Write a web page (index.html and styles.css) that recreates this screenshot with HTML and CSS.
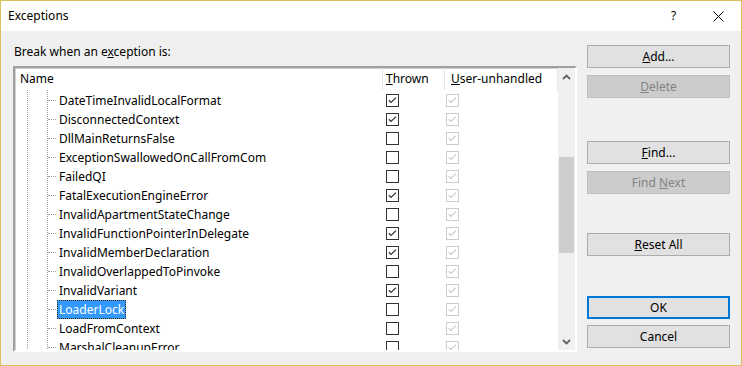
FILE: index.html
```html
<!DOCTYPE html>
<html lang="en">
<head>
	<meta charset="UTF-8">
	<title>Exceptions</title>
	<link rel="stylesheet" href="styles.css">
</head>
<body>
<svg class="defs" width="0" height="0">
	<symbol id="cb-on" viewBox="0 0 13 13">
		<rect x="0.5" y="0.5" width="12" height="12" fill="#fff" stroke="currentColor"/>
		<polyline points="2.8,6.2 5,8.4 10,3.6" fill="none" stroke="currentColor" stroke-width="1.3"/>
	</symbol>
	<symbol id="cb-off" viewBox="0 0 13 13">
		<rect x="0.5" y="0.5" width="12" height="12" fill="#fff" stroke="currentColor"/>
	</symbol>
</svg>
<div class="window">
	<div class="titlebar">
		<span class="title">Exceptions</span>
		<span class="help">?</span>
		<span class="close">
			<svg width="11" height="11" viewBox="0 0 11 11"><path d="M0.5 0.5 L10.5 10.5 M10.5 0.5 L0.5 10.5" stroke="#000" stroke-width="1"/></svg>
		</span>
	</div>
	<div class="body">
		<div class="main">
			<div class="prompt">Break when an e<u>x</u>ception is:</div>
			<div class="listbox">
				<div class="grid">
					<div class="header">
						<div class="hcell name">Name</div>
						<div class="hcell thrown"><u>T</u>hrown</div>
						<div class="hcell user"><u>U</u>ser-unhandled</div>
					</div>
					<div class="rows">
						<div class="row"><div class="cell name"><span class="label">DateTimeInvalidLocalFormat</span></div><div class="cell thrown"><svg class="cb"><use href="#cb-on"/></svg></div><div class="cell user"><svg class="cb off"><use href="#cb-on"/></svg></div></div>
						<div class="row"><div class="cell name"><span class="label">DisconnectedContext</span></div><div class="cell thrown"><svg class="cb"><use href="#cb-on"/></svg></div><div class="cell user"><svg class="cb off"><use href="#cb-on"/></svg></div></div>
						<div class="row"><div class="cell name"><span class="label">DllMainReturnsFalse</span></div><div class="cell thrown"><svg class="cb"><use href="#cb-off"/></svg></div><div class="cell user"><svg class="cb off"><use href="#cb-on"/></svg></div></div>
						<div class="row"><div class="cell name"><span class="label">ExceptionSwallowedOnCallFromCom</span></div><div class="cell thrown"><svg class="cb"><use href="#cb-off"/></svg></div><div class="cell user"><svg class="cb off"><use href="#cb-on"/></svg></div></div>
						<div class="row"><div class="cell name"><span class="label">FailedQI</span></div><div class="cell thrown"><svg class="cb"><use href="#cb-off"/></svg></div><div class="cell user"><svg class="cb off"><use href="#cb-on"/></svg></div></div>
						<div class="row"><div class="cell name"><span class="label">FatalExecutionEngineError</span></div><div class="cell thrown"><svg class="cb"><use href="#cb-on"/></svg></div><div class="cell user"><svg class="cb off"><use href="#cb-on"/></svg></div></div>
						<div class="row"><div class="cell name"><span class="label">InvalidApartmentStateChange</span></div><div class="cell thrown"><svg class="cb"><use href="#cb-off"/></svg></div><div class="cell user"><svg class="cb off"><use href="#cb-on"/></svg></div></div>
						<div class="row"><div class="cell name"><span class="label">InvalidFunctionPointerInDelegate</span></div><div class="cell thrown"><svg class="cb"><use href="#cb-on"/></svg></div><div class="cell user"><svg class="cb off"><use href="#cb-on"/></svg></div></div>
						<div class="row"><div class="cell name"><span class="label">InvalidMemberDeclaration</span></div><div class="cell thrown"><svg class="cb"><use href="#cb-on"/></svg></div><div class="cell user"><svg class="cb off"><use href="#cb-on"/></svg></div></div>
						<div class="row"><div class="cell name"><span class="label">InvalidOverlappedToPinvoke</span></div><div class="cell thrown"><svg class="cb"><use href="#cb-off"/></svg></div><div class="cell user"><svg class="cb off"><use href="#cb-on"/></svg></div></div>
						<div class="row"><div class="cell name"><span class="label">InvalidVariant</span></div><div class="cell thrown"><svg class="cb"><use href="#cb-on"/></svg></div><div class="cell user"><svg class="cb off"><use href="#cb-on"/></svg></div></div>
						<div class="row"><div class="cell name"><span class="label selected">LoaderLock</span></div><div class="cell thrown"><svg class="cb"><use href="#cb-off"/></svg></div><div class="cell user"><svg class="cb off"><use href="#cb-on"/></svg></div></div>
						<div class="row"><div class="cell name"><span class="label">LoadFromContext</span></div><div class="cell thrown"><svg class="cb"><use href="#cb-off"/></svg></div><div class="cell user"><svg class="cb off"><use href="#cb-on"/></svg></div></div>
						<div class="row"><div class="cell name"><span class="label">MarshalCleanupError</span></div><div class="cell thrown"><svg class="cb"><use href="#cb-off"/></svg></div><div class="cell user"><svg class="cb off"><use href="#cb-on"/></svg></div></div>
					</div>
				</div>
				<div class="scrollbar">
					<span class="arrow"><svg width="9" height="6" viewBox="0 0 9 6"><polyline points="1,5 4.5,1.5 8,5" fill="none" stroke="#606060" stroke-width="1.8"/></svg></span>
					<div class="track"><div class="thumb"></div></div>
					<span class="arrow"><svg width="9" height="6" viewBox="0 0 9 6"><polyline points="1,1 4.5,4.5 8,1" fill="none" stroke="#606060" stroke-width="1.8"/></svg></span>
				</div>
			</div>
		</div>
		<div class="buttons">
			<button class="btn"><u>A</u>dd...</button>
			<button class="btn disabled"><u>D</u>elete</button>
			<button class="btn gap-find"><u>F</u>ind...</button>
			<button class="btn disabled">Find <u>N</u>ext</button>
			<button class="btn gap-reset"><u>R</u>eset All</button>
			<button class="btn default gap-ok">OK</button>
			<button class="btn">Cancel</button>
		</div>
	</div>
</div>
</body>
</html>
```

FILE: styles.css
```css
* {
    padding: 0;
    margin: 0;
    box-sizing: border-box;
}

body {
    font-family: "Noto Sans", "Open Sans", sans-serif;
    font-size: 12px;
    color: #000;
    background: #f0f0f0;
}

.defs {
    position: absolute;
}

.window {
    width: 742px;
    height: 366px;
    border: 1px solid #dcbf5f;
    background: #f0f0f0;
    display: flex;
    flex-direction: column;
}

.titlebar {
    height: 30px;
    background: #fff;
    display: flex;
    align-items: center;
    padding-left: 7px;
}

.title {
    flex: 1;
    line-height: 16px;
}

.help {
    width: 42px;
    line-height: 16px;
}

.close {
    width: 28px;
    display: flex;
    align-items: center;
}

.body {
    flex: 1;
    display: flex;
    padding: 0 11px 0 12px;
}

.main {
    display: flex;
    flex-direction: column;
}

.prompt {
    line-height: 15px;
    margin: 13px 0 7px 0;
    padding-left: 1px;
}

.listbox {
    width: 564px;
    height: 286px;
    border: 2px solid;
    border-color: #a0a0a0 #fff #fff #a0a0a0;
    box-shadow: inset 1px 1px 0 #d0d0d0;
    background: #fff;
    display: flex;
}

.grid {
    width: 543px;
    overflow: hidden;
}

.header {
    display: flex;
    height: 22px;
}

.hcell {
    border-right: 1px solid #e5e5e5;
    line-height: 20px;
    padding-top: 1px;
}

.name {
    width: 368px;
    padding-left: 5px;
}

.thrown {
    width: 62px;
    padding-left: 3px;
}

.user {
    width: 113px;
    padding-left: 1px;
    border-right: 0;
}

.hcell.user {
    border-right: 1px solid #e5e5e5;
    padding-left: 6px;
}

.rows {
    height: 260px;
    padding-top: 1px;
    background-image:
        linear-gradient(to bottom, #a0a0a0 50%, transparent 50%),
        linear-gradient(to bottom, #a0a0a0 50%, transparent 50%);
    background-size: 1px 2px, 1px 2px;
    background-position: 12px 0, 32px 0;
    background-repeat: repeat-y;
}

.row {
    display: flex;
    height: 19px;
    align-items: center;
}

.cell.name {
    padding-left: 42px;
    position: relative;
    height: 19px;
    display: flex;
    align-items: center;
}

.cell.name::before {
    content: "";
    position: absolute;
    left: 33px;
    top: 9px;
    width: 8px;
    border-top: 1px dotted #a0a0a0;
}

.label {
    line-height: 17px;
    padding: 0 1px;
    border: 1px solid transparent;
    white-space: nowrap;
}

.label.selected {
    background: #3399ff;
    color: #fff;
    border: 1px dotted #3a2a10;
}

.cell {
    display: flex;
    align-items: center;
}

.cell.thrown {
    padding-left: 3px;
}

.cb {
    width: 13px;
    height: 13px;
    color: #333;
    display: block;
}

.cb.off {
    color: #cccccc;
}

.scrollbar {
    width: 17px;
    background: #f0f0f0;
    display: flex;
    flex-direction: column;
}

.arrow {
    height: 17px;
    display: flex;
    align-items: center;
    justify-content: center;
}

.track {
    flex: 1;
}

.thumb {
    margin: 72px 1px 0 1px;
    height: 96px;
    background: #cdcdcd;
}

.buttons {
    margin-left: 10px;
    padding-top: 14px;
    display: flex;
    flex-direction: column;
}

.btn {
    width: 143px;
    height: 23px;
    margin-bottom: 7px;
    border: 1px solid #adadad;
    background: #e1e1e1;
    font-family: "Noto Sans", "Open Sans", sans-serif;
    font-size: 12px;
    line-height: 16px;
    color: #000;
}

.btn.disabled {
    background: #cccccc;
    border-color: #bfbfbf;
    color: #838383;
}

.btn.default {
    border: 2px solid #0078d7;
}

.gap-find {
    margin-top: 36px;
}

.gap-reset {
    margin-top: 32px;
}

.gap-ok {
    margin-top: 33px;
    margin-bottom: 6px;
}
```
